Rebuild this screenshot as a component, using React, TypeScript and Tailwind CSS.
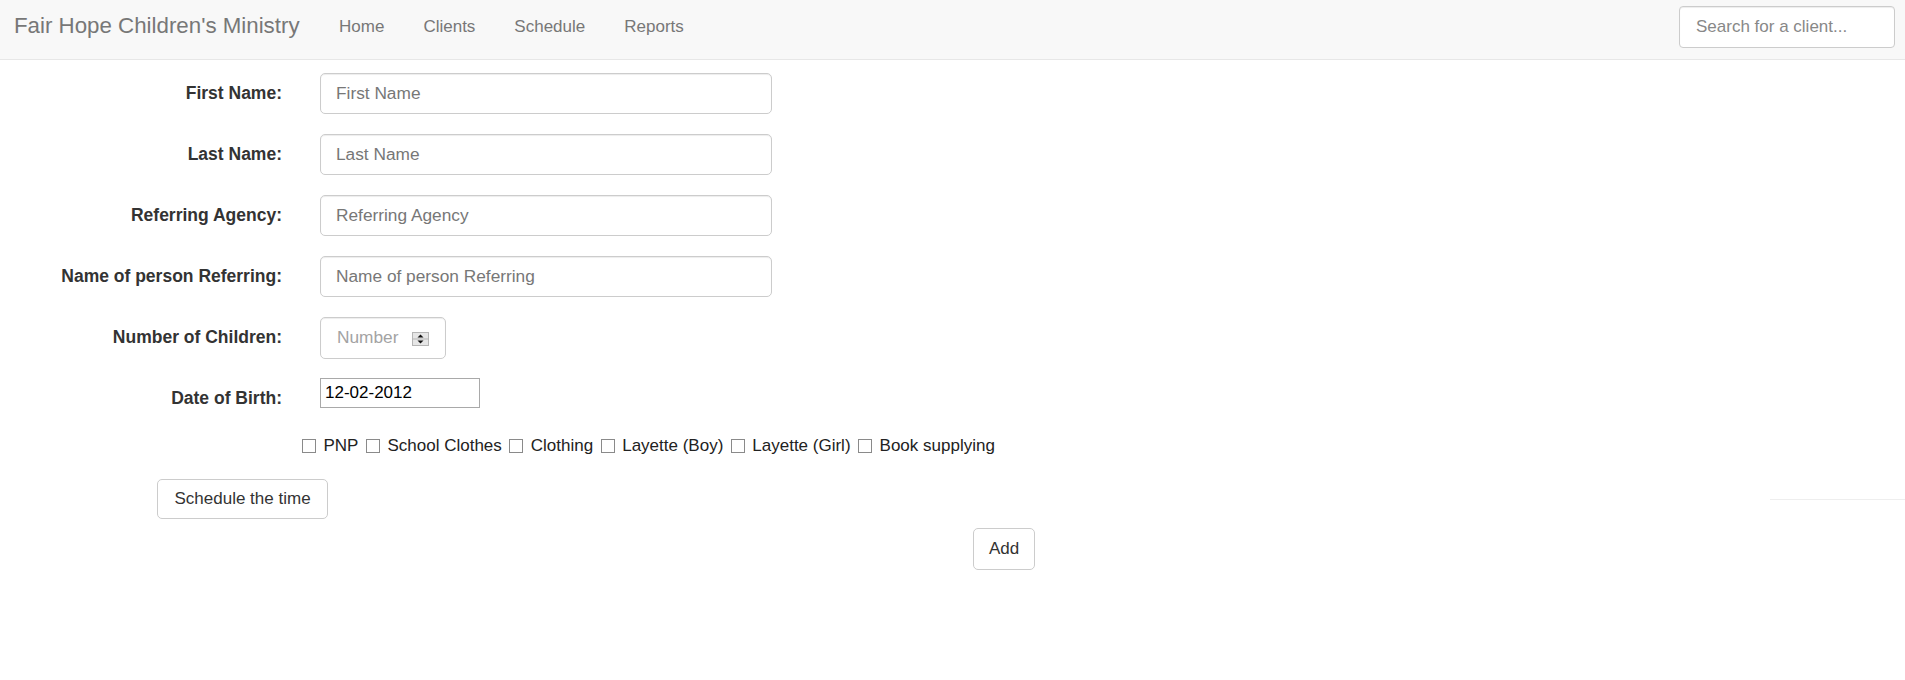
import { useState } from 'react'

const fields = [
  { label: 'First Name:', placeholder: 'First Name' },
  { label: 'Last Name:', placeholder: 'Last Name' },
  { label: 'Referring Agency:', placeholder: 'Referring Agency' },
  { label: 'Name of person Referring:', placeholder: 'Name of person Referring' },
]

const services = ['PNP', 'School Clothes', 'Clothing', 'Layette (Boy)', 'Layette (Girl)', 'Book supplying']

function Spinner() {
  return (
    <svg width="17" height="14" viewBox="0 0 17 14" className="shrink-0">
      <rect x="0.5" y="0.5" width="16" height="13" fill="#e6e6e6" stroke="#b5b5b5" />
      <line x1="1" y1="7" x2="16" y2="7" stroke="#b5b5b5" />
      <path d="M5.5 5.5 L8.5 2.5 L11.5 5.5 Z" fill="#111" />
      <path d="M5.5 8.5 L8.5 11.5 L11.5 8.5 Z" fill="#111" />
    </svg>
  )
}

export default function App() {
  const [dob, setDob] = useState('12-02-2012')

  return (
    <div className="min-h-screen bg-white font-['Liberation_Sans',Arial,sans-serif] text-[17px] text-[#333]">
      <nav className="h-[60px] bg-[#f8f8f8] border-b border-[#e7e7e7] flex items-start">
        <a className="ml-[14px] pt-[14px] text-[22.3px] leading-[24px] text-[#777] whitespace-nowrap">
          Fair Hope Children's Ministry
        </a>
        <ul className="flex ml-[20px]">
          {['Home', 'Clients', 'Schedule', 'Reports'].map((item) => (
            <li key={item}>
              <a className="block px-[19.5px] pt-[15px] leading-[24px] text-[#777]">{item}</a>
            </li>
          ))}
        </ul>
        <input
          type="text"
          placeholder="Search for a client..."
          className="ml-auto mr-[10px] mt-[6px] h-[42px] w-[216px] bg-white border border-[#ccc] rounded-[4px] px-[16px] text-[17px] text-[#555] placeholder:text-[#888] outline-none shadow-[inset_0_1px_1px_rgba(0,0,0,0.075)]"
        />
      </nav>

      <form className="pt-[13px]" onSubmit={(e) => e.preventDefault()}>
        {fields.map((f) => (
          <div key={f.label} className="flex items-start mb-[20px]">
            <label className="w-[282px] shrink-0 text-right font-bold text-[17.5px] pt-[8px] leading-[24px]">{f.label}</label>
            <input
              type="text"
              placeholder={f.placeholder}
              className="ml-[38px] h-[41px] w-[452px] border border-[#ccc] rounded-[5px] px-[15px] text-[17.3px] text-[#555] placeholder:text-[#777] outline-none shadow-[inset_0_1px_1px_rgba(0,0,0,0.075)]"
            />
          </div>
        ))}

        <div className="flex items-start mb-[19px]">
          <label className="w-[282px] shrink-0 text-right font-bold text-[17.5px] pt-[8px] leading-[24px]">Number of Children:</label>
          <div className="ml-[38px] h-[42px] w-[126px] border border-[#ccc] rounded-[5px] pl-[16px] pr-[16px] flex items-center shadow-[inset_0_1px_1px_rgba(0,0,0,0.075)]">
            <input
              type="text"
              placeholder="Number"
              className="w-[70px] min-w-0 text-[17.3px] text-[#555] placeholder:text-[#a3a3a3] outline-none bg-transparent"
            />
            <span className="ml-auto mt-[1px]">
              <Spinner />
            </span>
          </div>
        </div>

        <div className="flex items-start">
          <label className="w-[282px] shrink-0 text-right font-bold text-[17.5px] pt-[8px] leading-[24px]">Date of Birth:</label>
          <input
            type="text"
            value={dob}
            onChange={(e) => setDob(e.target.value)}
            className="ml-[38px] h-[30px] w-[160px] border border-[#a9a9a9] px-[4px] text-[17px] text-black outline-none"
          />
        </div>

        <div className="flex items-center pl-[302px] mt-[24px] leading-[24px] text-[#222]">
          {services.map((s, i) => (
            <label key={s} className={`flex items-center ${i < services.length - 1 ? 'mr-[7.5px]' : ''}`}>
              <span className="w-[14px] h-[14px] border border-[#8a8a8a] bg-white mr-[7.5px] shrink-0" />
              <span className="whitespace-nowrap">{s}</span>
            </label>
          ))}
        </div>

        <div className="flex items-center mt-[21px]">
          <button
            type="button"
            className="ml-[157px] h-[40px] px-[16.5px] bg-white border border-[#ccc] rounded-[5px] text-[17px] text-[#333] whitespace-nowrap"
          >
            Schedule the time
          </button>
          <div className="ml-auto w-[135px] h-px bg-[#eee]" />
        </div>

        <div className="mt-[9px]">
          <button
            type="submit"
            className="ml-[973px] h-[42px] w-[62px] bg-white border border-[#ccc] rounded-[5px] text-[17px] text-[#333]"
          >
            Add
          </button>
        </div>
      </form>
    </div>
  )
}
